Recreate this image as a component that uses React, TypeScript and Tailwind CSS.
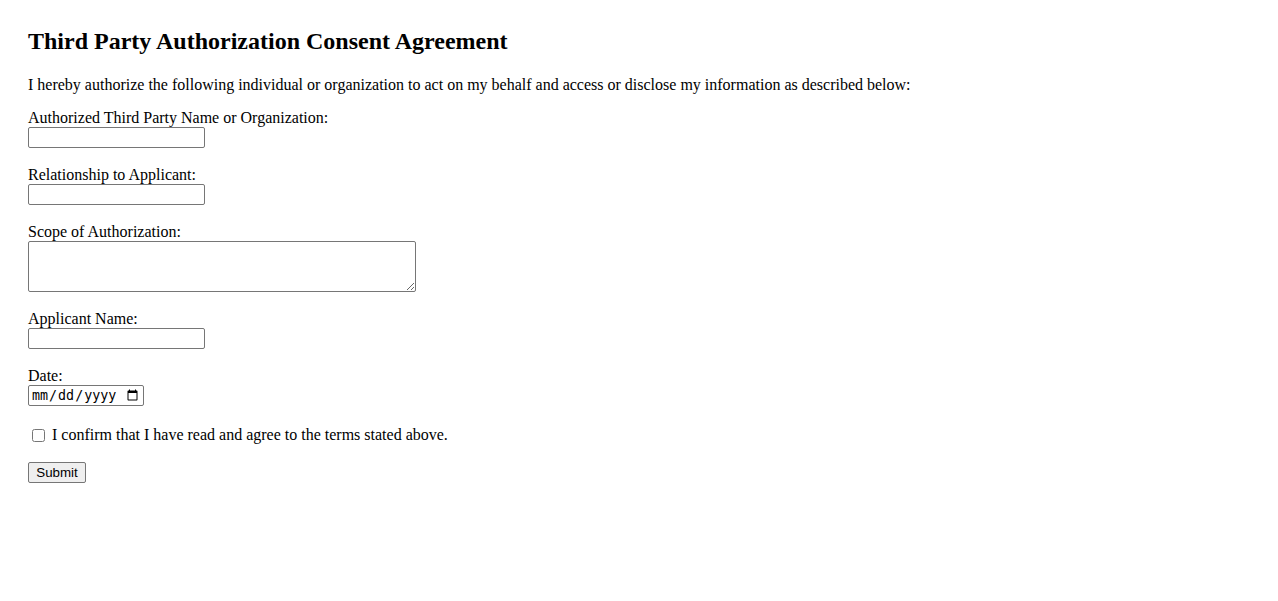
import React from "react";

export default function App() {
  const inputCls =
    "block w-[177px] h-[21px] border border-[#767676] rounded-[2px] bg-white px-[2px] py-[1px] text-[13.33px] font-['Liberation_Sans',Arial,sans-serif] text-black";
  const labelCls = "block leading-[18px]";
  return (
    <div className="min-h-[601px] bg-white p-[28px] font-['Liberation_Serif','Times_New_Roman',serif] text-[16px] text-black">
      <h2 className="text-[24px] font-bold leading-[27.6px] mb-[20px]">
        Third Party Authorization Consent Agreement
      </h2>
      <p className="leading-[18.4px] mb-[15px]">
        I hereby authorize the following individual or organization to act on my behalf and access or disclose my information as described below:
      </p>
      <form onSubmit={(e) => e.preventDefault()}>
        <div className="mb-[18px]">
          <label className={labelCls} htmlFor="tp">Authorized Third Party Name or Organization:</label>
          <input id="tp" type="text" className={inputCls} />
        </div>
        <div className="mb-[18px]">
          <label className={labelCls} htmlFor="rel">Relationship to Applicant:</label>
          <input id="rel" type="text" className={inputCls} />
        </div>
        <div className="mb-[18px]">
          <label className={labelCls} htmlFor="scope">Scope of Authorization:</label>
          <textarea
            id="scope"
            className="block w-[388px] h-[51px] border border-[#767676] rounded-[2px] bg-white px-[2px] py-[2px] text-[13.33px] font-['Liberation_Mono',monospace] resize"
          />
        </div>
        <div className="mb-[18px]">
          <label className={labelCls} htmlFor="app">Applicant Name:</label>
          <input id="app" type="text" className={inputCls} />
        </div>
        <div className="mb-[20px]">
          <label className={labelCls} htmlFor="date">Date:</label>
          <input
            id="date"
            type="date"
            className="block w-[116px] h-[21px] border border-[#767676] rounded-[2px] bg-white px-[2px] py-[1px] text-[13.33px] font-['DejaVu_Sans_Mono',monospace] text-black"
          />
        </div>
        <div className="mb-[18px] flex items-center leading-[18px]">
          <input type="checkbox" className="ml-[4px] mr-[7px] w-[13px] h-[13px]" id="agree" />
          <label htmlFor="agree">I confirm that I have read and agree to the terms stated above.</label>
        </div>
        <button
          type="submit"
          className="block w-[58px] h-[21px] border border-[#767676] rounded-[2px] bg-[#efefef] px-[6px] text-[13.33px] leading-[normal] font-['Liberation_Sans',Arial,sans-serif] text-black"
        >
          Submit
        </button>
      </form>
    </div>
  );
}
